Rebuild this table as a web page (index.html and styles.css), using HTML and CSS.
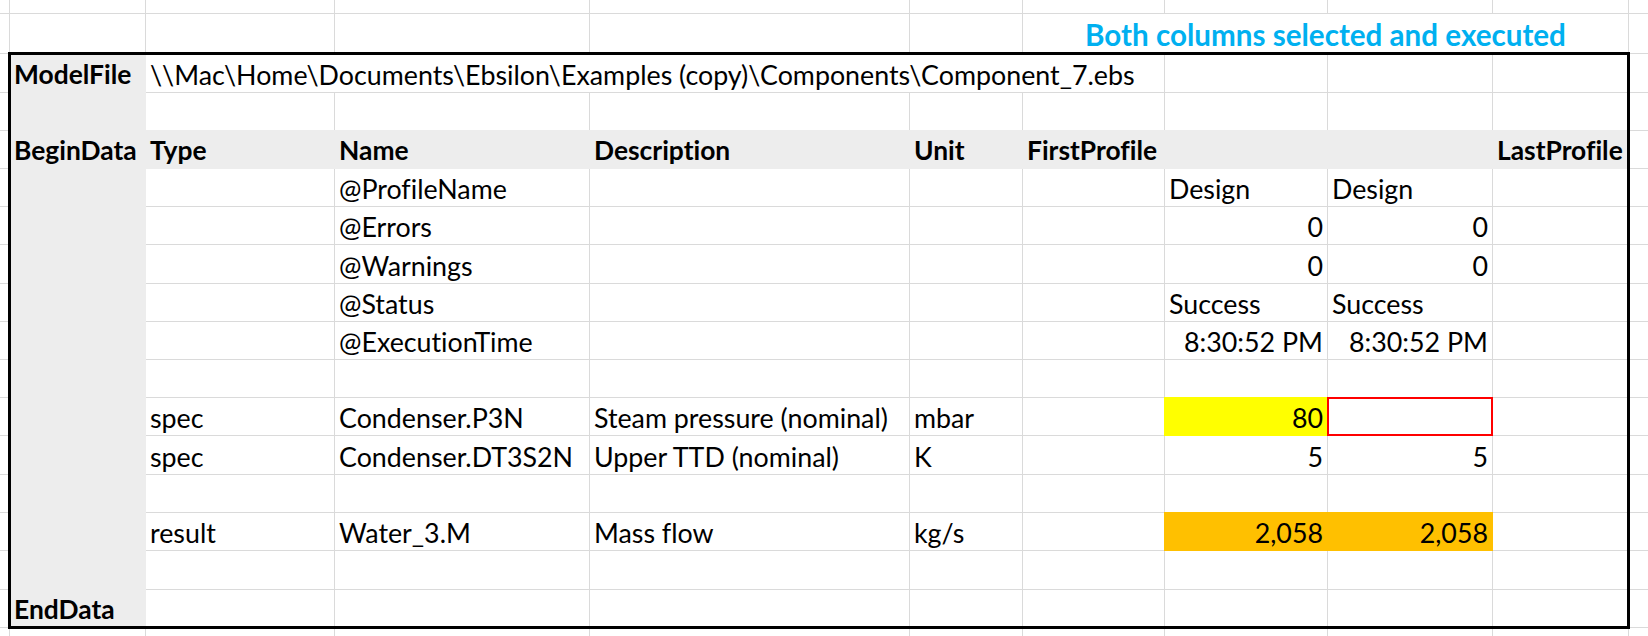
FILE: index.html
```html
<!DOCTYPE html>
<html>
<head>
<meta charset="utf-8">
<title>Ebsilon profile sheet</title>
<link rel="stylesheet" href="styles.css">
</head>
<body>
<div class="sheet">
  <!-- row 0 (partial) -->
  <div class="c"></div><div class="c"></div><div class="c"></div><div class="c"></div><div class="c"></div><div class="c"></div><div class="c"></div><div class="c"></div><div class="c"></div><div class="c"></div><div class="c"></div>
  <!-- row 1 -->
  <div class="c"></div><div class="c"></div><div class="c"></div><div class="c"></div><div class="c"></div><div class="c"></div>
  <div class="c title span4">Both columns selected and executed</div>
  <div class="c"></div>
  <!-- row 2 -->
  <div class="c"></div>
  <div class="c g b">ModelFile</div>
  <div class="c span5">\\Mac\Home\Documents\Ebsilon\Examples (copy)\Components\Component_7.ebs</div>
  <div class="c"></div><div class="c"></div><div class="c"></div><div class="c"></div>
  <!-- row 3 -->
  <div class="c"></div><div class="c g"></div><div class="c"></div><div class="c"></div><div class="c"></div><div class="c"></div><div class="c"></div><div class="c"></div><div class="c"></div><div class="c"></div><div class="c"></div>
  <!-- row 4 header -->
  <div class="c"></div>
  <div class="c g b">BeginData</div>
  <div class="c g b">Type</div>
  <div class="c g b">Name</div>
  <div class="c g b">Description</div>
  <div class="c g b">Unit</div>
  <div class="c g b">FirstProfile</div>
  <div class="c g"></div>
  <div class="c g"></div>
  <div class="c g b">LastProfile</div>
  <div class="c"></div>
  <!-- row 5 -->
  <div class="c"></div><div class="c g"></div><div class="c"></div>
  <div class="c">@ProfileName</div>
  <div class="c"></div><div class="c"></div><div class="c"></div>
  <div class="c">Design</div>
  <div class="c">Design</div>
  <div class="c"></div><div class="c"></div>
  <!-- row 6 -->
  <div class="c"></div><div class="c g"></div><div class="c"></div>
  <div class="c">@Errors</div>
  <div class="c"></div><div class="c"></div><div class="c"></div>
  <div class="c r">0</div>
  <div class="c r">0</div>
  <div class="c"></div><div class="c"></div>
  <!-- row 7 -->
  <div class="c"></div><div class="c g"></div><div class="c"></div>
  <div class="c">@Warnings</div>
  <div class="c"></div><div class="c"></div><div class="c"></div>
  <div class="c r">0</div>
  <div class="c r">0</div>
  <div class="c"></div><div class="c"></div>
  <!-- row 8 -->
  <div class="c"></div><div class="c g"></div><div class="c"></div>
  <div class="c">@Status</div>
  <div class="c"></div><div class="c"></div><div class="c"></div>
  <div class="c">Success</div>
  <div class="c">Success</div>
  <div class="c"></div><div class="c"></div>
  <!-- row 9 -->
  <div class="c"></div><div class="c g"></div><div class="c"></div>
  <div class="c">@ExecutionTime</div>
  <div class="c"></div><div class="c"></div><div class="c"></div>
  <div class="c r">8:30:52 PM</div>
  <div class="c r">8:30:52 PM</div>
  <div class="c"></div><div class="c"></div>
  <!-- row 10 -->
  <div class="c"></div><div class="c g"></div><div class="c"></div><div class="c"></div><div class="c"></div><div class="c"></div><div class="c"></div><div class="c"></div><div class="c"></div><div class="c"></div><div class="c"></div>
  <!-- row 11 -->
  <div class="c"></div><div class="c g"></div>
  <div class="c">spec</div>
  <div class="c">Condenser.P3N</div>
  <div class="c">Steam pressure (nominal)</div>
  <div class="c">mbar</div>
  <div class="c"></div>
  <div class="c r y">80</div>
  <div class="c red"></div>
  <div class="c"></div><div class="c"></div>
  <!-- row 12 -->
  <div class="c"></div><div class="c g"></div>
  <div class="c">spec</div>
  <div class="c">Condenser.DT3S2N</div>
  <div class="c">Upper TTD (nominal)</div>
  <div class="c">K</div>
  <div class="c"></div>
  <div class="c r">5</div>
  <div class="c r">5</div>
  <div class="c"></div><div class="c"></div>
  <!-- row 13 -->
  <div class="c"></div><div class="c g"></div><div class="c"></div><div class="c"></div><div class="c"></div><div class="c"></div><div class="c"></div><div class="c"></div><div class="c"></div><div class="c"></div><div class="c"></div>
  <!-- row 14 -->
  <div class="c"></div><div class="c g"></div>
  <div class="c">result</div>
  <div class="c">Water_3.M</div>
  <div class="c">Mass flow</div>
  <div class="c">kg/s</div>
  <div class="c"></div>
  <div class="c r o">2,058</div>
  <div class="c r o">2,058</div>
  <div class="c"></div><div class="c"></div>
  <!-- row 15 -->
  <div class="c"></div><div class="c g"></div><div class="c"></div><div class="c"></div><div class="c"></div><div class="c"></div><div class="c"></div><div class="c"></div><div class="c"></div><div class="c"></div><div class="c"></div>
  <!-- row 16 -->
  <div class="c"></div>
  <div class="c g b">EndData</div>
  <div class="c"></div><div class="c"></div><div class="c"></div><div class="c"></div><div class="c"></div><div class="c"></div><div class="c"></div><div class="c"></div><div class="c"></div>
  <!-- row 17 (partial) -->
  <div class="c"></div><div class="c"></div><div class="c"></div><div class="c"></div><div class="c"></div><div class="c"></div><div class="c"></div><div class="c"></div><div class="c"></div><div class="c"></div><div class="c"></div>

  <div class="frame"></div>
</div>
</body>
</html>
```
FILE: styles.css
```css
html, body {
  margin: 0;
  padding: 0;
  background: #ffffff;
  overflow: hidden;
}

body {
  font-family: Lato, "Open Sans", "DejaVu Sans", sans-serif;
  font-size: 26.8px;
  color: #000000;
  font-variant-ligatures: none;
}

.sheet {
  position: relative;
  display: grid;
  grid-template-columns: 9px 135px 188px 254px 319px 112px 141px 162px 164px 135px 40px;
  grid-template-rows: 13px 39px 38px 37px 37px 37px 37px 38px 37px 37px 37px 37px 38px 37px 37px 38px 37px 20px;
  gap: 1px;
  background: #dadada;
  width: max-content;
}

.c {
  background: #ffffff;
  display: flex;
  align-items: flex-end;
  justify-content: flex-start;
  padding: 0 4px 1px 4px;
  line-height: 1.2;
  white-space: nowrap;
  min-width: 0;
}

.r {
  justify-content: flex-end;
}

.b {
  font-weight: 700;
  font-size: 26.4px;
}

.span4 {
  grid-column: span 4;
}

.span5 {
  grid-column: span 5;
}

.title {
  justify-content: center;
  color: #00b0f0;
  font-weight: 700;
  font-size: 29.6px;
}

.g,
.y,
.o {
  margin: -1px;
  padding: 1px 5px 2px 5px;
}

.g {
  background: #ededed;
}

.y {
  background: #ffff00;
}

.o {
  background: #ffc000;
}

.red {
  margin: -1px;
  border: 2px solid #ff0000;
}

.frame {
  position: absolute;
  left: 8px;
  top: 52px;
  width: 1622px;
  height: 577px;
  box-sizing: border-box;
  border: 3px solid #000000;
  pointer-events: none;
}
```
